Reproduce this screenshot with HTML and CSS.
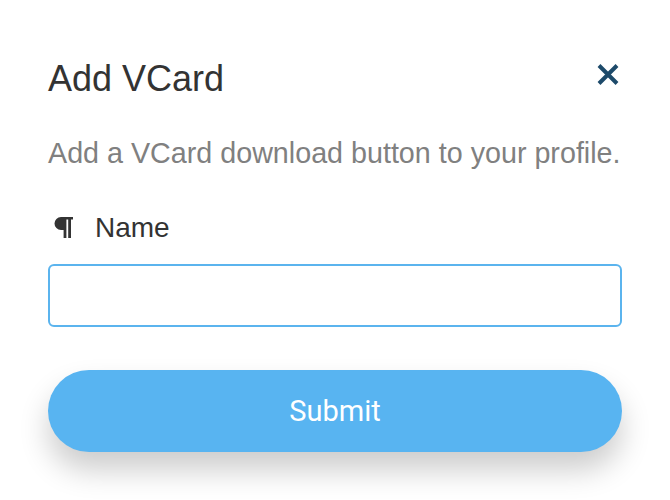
FILE: index.html
```html
<!DOCTYPE html>
<html lang="en">
<head>
<meta charset="utf-8">
<title>Add VCard</title>
<link rel="stylesheet" href="styles.css">
</head>
<body>
<div class="modal">
  <div class="modal-header">
    <h1 class="modal-title">Add VCard</h1>
    <button class="close-btn" aria-label="Close">
      <svg width="22" height="21" viewBox="0 0 22 21"><path d="M2 1.5 L20 19.5 M20 1.5 L2 19.5" stroke="#1d4a6a" stroke-width="4" fill="none"/></svg>
    </button>
  </div>
  <p class="modal-desc">Add a VCard download button to your profile.</p>
  <label class="field-label" for="name">
    <svg class="pilcrow" width="19" height="21" viewBox="0 0 19 21"><path d="M7 0 H19 V2.6 H17 V21 H14.2 V2.6 H12.4 V21 H9.6 V13 H7 A6.5 6.5 0 0 1 7 0 Z" fill="#333"/></svg>
    <span>Name</span>
  </label>
  <input class="text-input" id="name" type="text">
  <button class="submit-btn">Submit</button>
</div>
</body>
</html>
```
FILE: styles.css
```css
html, body {
  margin: 0;
  padding: 0;
  background: #ffffff;
}
body {
  font-family: "Liberation Sans", Arial, sans-serif;
  min-height: 500px;
}
.modal {
  padding: 0 48px 48px;
  display: flex;
  flex-direction: column;
}
.modal-header {
  display: flex;
  justify-content: space-between;
  align-items: flex-start;
  padding-top: 59px;
}
.modal-title {
  margin: 0;
  font-size: 36px;
  line-height: 40px;
  font-weight: normal;
  color: #333333;
}
.close-btn {
  border: none;
  background: none;
  padding: 0;
  margin: 5px 3px 0 0;
  width: 22px;
  height: 21px;
  display: block;
  cursor: pointer;
}
.close-btn svg {
  display: block;
}
.modal-desc {
  margin: 38px 0 0;
  font-size: 28.7px;
  line-height: 32px;
  color: #808080;
  white-space: nowrap;
}
.field-label {
  margin-top: 43px;
  display: flex;
  align-items: center;
  gap: 22px;
  font-size: 28px;
  line-height: 32px;
  color: #333333;
  padding-left: 6px;
}
.pilcrow {
  display: block;
  margin-top: -2px;
}
.text-input {
  margin-top: 20px;
  box-sizing: border-box;
  height: 63px;
  width: 100%;
  border: 2px solid #5bb4ee;
  border-radius: 6px;
  font-size: 24px;
  padding: 0 14px;
  outline: none;
}
.submit-btn {
  margin-top: 43px;
  height: 82px;
  width: 100%;
  border: none;
  border-radius: 41px;
  background: #58b4f1;
  color: #ffffff;
  font-family: Roboto, "Liberation Sans", sans-serif;
  font-size: 29px;
  box-shadow: 0 18px 30px rgba(0, 0, 0, 0.2);
  cursor: pointer;
}
```
